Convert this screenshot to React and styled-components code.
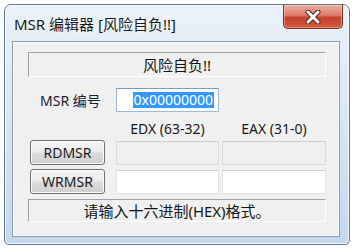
import React from "react";
import styled, { createGlobalStyle } from "styled-components";

const GlobalStyle = createGlobalStyle`
  html, body {
    margin: 0;
    padding: 0;
    background: #ffffff;
  }
  body {
    font-family: "Noto Sans", "Noto Sans CJK SC", sans-serif;
    color: #1b1b1b;
  }
`;

const Page = styled.div`
  padding: 4px 0 0 4px;
`;

const Window = styled.div`
  position: relative;
  box-sizing: border-box;
  width: 346px;
  height: 241px;
  border: 1px solid #65768a;
  border-radius: 7px 7px 5px 5px;
  background: linear-gradient(to bottom, #eaf1f9 0%, #dbe7f4 45%, #c3d8ee 100%);
  box-shadow: inset 0 0 0 1px rgba(255, 255, 255, 0.75);
  padding: 0 9px 7px 7px;
  display: flex;
  flex-direction: column;
`;

const TitleBar = styled.div`
  height: 36px;
  display: flex;
  align-items: center;
  padding-left: 2px;
  font-size: 15px;
  color: #1a1a1a;
  text-shadow: 0 0 6px rgba(255, 255, 255, 0.9);
`;

const CloseButton = styled.div`
  position: absolute;
  top: 0;
  right: 6px;
  width: 60px;
  height: 24px;
  box-sizing: border-box;
  border: 1px solid #7c2f22;
  border-top: none;
  border-radius: 0 0 5px 5px;
  background: linear-gradient(to bottom, #eab0a3 0%, #dc7b68 45%, #c6412a 55%, #cf5a3c 100%);
  box-shadow: inset 0 0 0 1px rgba(255, 220, 210, 0.45);
  display: flex;
  align-items: center;
  justify-content: center;
`;

const Client = styled.div`
  box-sizing: border-box;
  height: 196px;
  border: 1px solid #8a98a8;
  background: #f0f0f0;
  box-shadow: inset 0 0 0 1px #fbfbfb;
  padding: 10px 13px 0 15px;
  display: flex;
  flex-direction: column;
`;

const StatusBox = styled.div`
  box-sizing: border-box;
  width: 298px;
  height: ${(p) => p.$h}px;
  margin-top: ${(p) => p.$mt}px;
  border-top: 1px solid #a0a0a0;
  border-left: 1px solid #a0a0a0;
  border-bottom: 1px solid #ffffff;
  border-right: 1px solid #ffffff;
  display: flex;
  align-items: center;
  justify-content: center;
  font-size: ${(p) => p.$fs}px;
  color: #151515;
`;

const MsrRow = styled.div`
  margin-top: 11px;
  height: 24px;
  display: flex;
  align-items: center;
`;

const Label = styled.div`
  box-sizing: border-box;
  width: 88px;
  padding-left: 12px;
  font-size: 14px;
  color: #1c2130;
`;

const FocusInput = styled.div`
  box-sizing: border-box;
  width: 103px;
  height: 24px;
  border: 1px solid #9cb8d8;
  border-top-color: #7c9dc4;
  background: #ffffff;
  display: flex;
  align-items: center;
  justify-content: flex-end;
  padding-right: 4px;
`;

const Selected = styled.span`
  background: #3399ff;
  color: #ffffff;
  font-size: 14px;
  line-height: 16px;
  padding: 0 1px;
`;

const HeaderRow = styled.div`
  height: 28px;
  box-sizing: border-box;
  padding-top: 8px;
  margin-left: 88px;
  display: flex;
  gap: 3px;
`;

const ColHead = styled.div`
  width: ${(p) => p.$w}px;
  text-align: center;
  font-size: 14px;
  line-height: 18px;
`;

const RegRow = styled.div`
  height: 25px;
  margin-top: ${(p) => p.$mt}px;
  display: flex;
  align-items: center;
`;

const Button = styled.div`
  box-sizing: border-box;
  width: 75px;
  height: 25px;
  margin-left: 2px;
  margin-right: 11px;
  border: 1px solid #707070;
  border-radius: 3px;
  background: linear-gradient(to bottom, #f4f4f4 0%, #ececec 48%, #dcdcdc 52%, #cfcfcf 100%);
  box-shadow: inset 0 0 0 1px #fbfbfb;
  display: flex;
  align-items: center;
  justify-content: center;
  font-size: 14px;
  color: #1a1a1a;
`;

const Field = styled.div`
  box-sizing: border-box;
  width: ${(p) => p.$w}px;
  height: 24px;
  margin-left: ${(p) => p.$ml}px;
  border: 1px solid ${(p) => (p.$disabled ? "#dadada" : "#e2e3e6")};
  border-top-color: ${(p) => (p.$disabled ? "#cfcfcf" : "#cdd0d5")};
  background: ${(p) => (p.$disabled ? "#efefef" : "#ffffff")};
`;

const CloseIcon = () => (
  <svg width="18" height="14" viewBox="0 0 18 14">
    <path d="M4 2 L14 12 M14 2 L4 12" stroke="#5a1f16" strokeWidth="5" strokeLinecap="round" />
    <path d="M4 2 L14 12 M14 2 L4 12" stroke="#ffffff" strokeWidth="3" strokeLinecap="round" />
  </svg>
);

const App = () => {
  return (
    <Page>
      <GlobalStyle />
      <Window>
        <TitleBar>MSR 编辑器 [风险自负!!]</TitleBar>
        <CloseButton>
          <CloseIcon />
        </CloseButton>
        <Client>
          <StatusBox $h={25} $mt={0} $fs={15}>
            风险自负!!
          </StatusBox>
          <MsrRow>
            <Label>MSR 编号</Label>
            <FocusInput>
              <Selected>0x00000000</Selected>
            </FocusInput>
          </MsrRow>
          <HeaderRow>
            <ColHead $w={103}>EDX (63-32)</ColHead>
            <ColHead $w={104}>EAX (31-0)</ColHead>
          </HeaderRow>
          <RegRow $mt={0}>
            <Button>RDMSR</Button>
            <Field $w={103} $ml={0} $disabled />
            <Field $w={104} $ml={3} $disabled />
          </RegRow>
          <RegRow $mt={4}>
            <Button>WRMSR</Button>
            <Field $w={103} $ml={0} />
            <Field $w={104} $ml={3} />
          </RegRow>
          <StatusBox $h={23} $mt={5} $fs={15}>
            请输入十六进制(HEX)格式。
          </StatusBox>
        </Client>
      </Window>
    </Page>
  );
};

export default App;
